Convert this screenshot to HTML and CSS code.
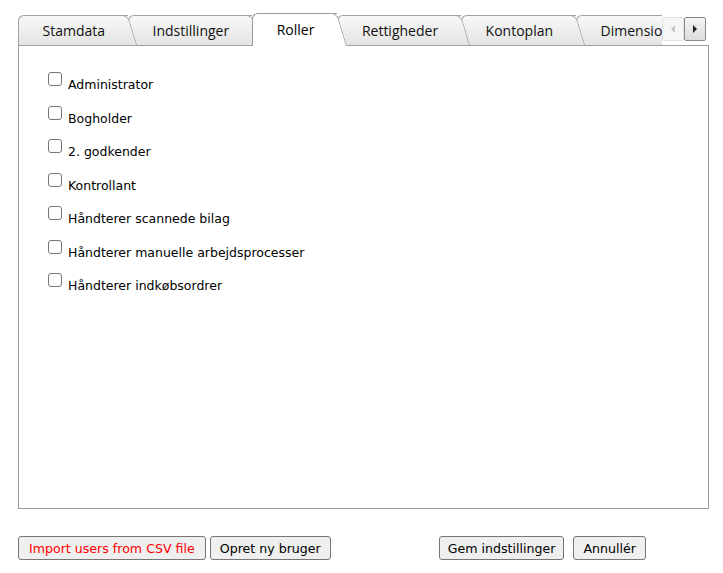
FILE: index.html
```html
<!DOCTYPE html>
<html lang="da">
<head>
<meta charset="utf-8">
<title>Roller</title>
<link rel="stylesheet" href="styles.css">
</head>
<body>
<div class="page">
  <div class="tabbar">
    <div class="tabview">
      <div class="tab t1">Stamdata</div>
      <div class="tab t2">Indstillinger</div>
      <div class="tab active">Roller</div>
      <div class="tab t4">Rettigheder</div>
      <div class="tab t5">Kontoplan</div>
      <div class="tab t6">Dimensioner</div>
    </div>
    <div class="scroller">
      <div class="sbtn disabled">
        <svg width="6" height="8" viewBox="0 0 6 8"><path d="M5 0 L1 4 L5 8 Z" fill="#c4c4c4"/></svg>
      </div>
      <div class="sbtn">
        <svg width="6" height="8" viewBox="0 0 6 8"><path d="M1 0 L5 4 L1 8 Z" fill="#222"/></svg>
      </div>
    </div>
  </div>
  <div class="panel">
    <label class="role"><input type="checkbox" class="chk"><span class="lbl">Administrator</span></label>
    <label class="role"><input type="checkbox" class="chk"><span class="lbl">Bogholder</span></label>
    <label class="role"><input type="checkbox" class="chk"><span class="lbl">2. godkender</span></label>
    <label class="role"><input type="checkbox" class="chk"><span class="lbl">Kontrollant</span></label>
    <label class="role"><input type="checkbox" class="chk"><span class="lbl">Håndterer scannede bilag</span></label>
    <label class="role"><input type="checkbox" class="chk"><span class="lbl">Håndterer manuelle arbejdsprocesser</span></label>
    <label class="role"><input type="checkbox" class="chk"><span class="lbl">Håndterer indkøbsordrer</span></label>
  </div>
  <div class="actions">
    <button class="btn btn-red">Import users from CSV file</button>
    <button class="btn">Opret ny bruger</button>
    <button class="btn btn-save">Gem indstillinger</button>
    <button class="btn">Annullér</button>
  </div>
</div>
</body>
</html>
```
FILE: styles.css
```css
html, body {
  margin: 0;
  padding: 0;
  background: #ffffff;
}
body {
  font-family: "DejaVu Sans", Verdana, sans-serif;
  font-size: 12.5px;
  color: #000;
}
.page {
  padding: 12px 0 0 18px;
}

/* ---------- tab bar ---------- */
.tabbar {
  position: relative;
  width: 691px;
  height: 34px;
  display: flex;
}
.tabbar::after {
  content: "";
  position: absolute;
  left: 0;
  right: 0;
  bottom: 0;
  height: 1px;
  background: #a0a0a0;
  z-index: 7;
}
.tabview {
  width: 644px;
  height: 34px;
  display: flex;
  align-items: flex-start;
  overflow: hidden;
}
.tab {
  position: relative;
  flex-shrink: 0;
  box-sizing: border-box;
  height: 30px;
  margin-top: 3px;
  padding: 0 23px 0 23.5px;
  display: flex;
  align-items: center;
  font-family: "Open Sans", "Noto Sans", sans-serif;
  font-size: 14px;
  color: #111;
  background: linear-gradient(#f8f8f8, #e4e4e4);
  border-top: 1px solid #a3a3a3;
  border-left: 1px solid #a3a3a3;
  border-top-left-radius: 6px;
  white-space: nowrap;
}
.tab::after {
  content: "";
  position: absolute;
  top: -1px;
  bottom: 0;
  left: calc(100% - 12px);
  width: 11px;
  background: linear-gradient(#f8f8f8, #e4e4e4);
  border-top: 1px solid #a3a3a3;
  border-right: 1px solid #a3a3a3;
  border-top-right-radius: 6px;
  transform: skewX(17deg);
  transform-origin: 0 0;
}
.t1 { z-index: 6; }
.t2 { z-index: 5; }
.t4 { z-index: 3; }
.t5 { z-index: 2; }
.t6 { z-index: 1; }
.tab.active {
  z-index: 10;
  height: 33px;
  margin-top: 1px;
  padding-bottom: 1px;
  background: #ffffff;
  border-color: #9a9a9a;
  color: #000;
}
.tab.active::after {
  background: #ffffff;
  border-color: #9a9a9a;
}

.scroller {
  display: flex;
  margin-top: 5px;
  height: 24px;
}
.sbtn {
  box-sizing: border-box;
  width: 22px;
  height: 24px;
  display: flex;
  align-items: center;
  justify-content: center;
  border: 1px solid #8a8a8a;
  border-radius: 2px;
  background: linear-gradient(#f4f4f4, #dcdcdc);
}
.sbtn.disabled {
  border-color: #e2e2e2;
  background: #f6f6f6;
}

/* ---------- panel ---------- */
.panel {
  box-sizing: border-box;
  width: 691px;
  height: 463px;
  border: 1px solid #9c9c9c;
  border-top: none;
  padding: 27px 0 0 29px;
  display: flex;
  flex-direction: column;
}
.role {
  display: flex;
  align-items: flex-start;
  height: 33.5px;
}
.chk {
  appearance: none;
  -webkit-appearance: none;
  box-sizing: border-box;
  width: 14px;
  height: 14px;
  margin: -1px 6px 0 0;
  border: 1px solid #767676;
  border-radius: 3px;
  background: #fff;
}
.lbl {
  line-height: 16px;
  padding-top: 4px;
}

/* ---------- buttons ---------- */
.actions {
  display: flex;
  margin-top: 27px;
}
.btn {
  box-sizing: border-box;
  height: 24px;
  padding: 0 9px;
  margin-right: 4px;
  font-family: "DejaVu Sans", Verdana, sans-serif;
  font-size: 12.6px;
  color: #000;
  background: #efefef;
  border: 1px solid #767676;
  border-radius: 3px;
}
.btn-red {
  color: #ff0000;
  padding: 0 10px;
}
.btn-save {
  margin-left: 104px;
  margin-right: 9px;
  padding: 0 8px;
}
```
